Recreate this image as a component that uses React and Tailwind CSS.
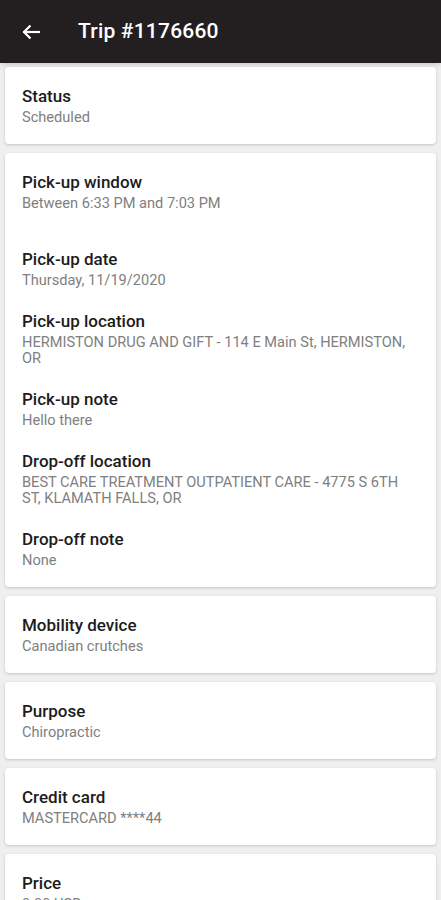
import React from 'react';

const sections = [
  [{ label: 'Status', value: 'Scheduled' }],
  [
    { label: 'Pick-up window', value: 'Between 6:33 PM and 7:03 PM', extra: true },
    { label: 'Pick-up date', value: 'Thursday, 11/19/2020' },
    { label: 'Pick-up location', value: 'HERMISTON DRUG AND GIFT - 114 E Main St, HERMISTON, OR' },
    { label: 'Pick-up note', value: 'Hello there' },
    { label: 'Drop-off location', value: 'BEST CARE TREATMENT OUTPATIENT CARE - 4775 S 6TH ST, KLAMATH FALLS, OR' },
    { label: 'Drop-off note', value: 'None' },
  ],
  [{ label: 'Mobility device', value: 'Canadian crutches' }],
  [{ label: 'Purpose', value: 'Chiropractic' }],
  [{ label: 'Credit card', value: 'MASTERCARD ****44' }],
  [{ label: 'Price', value: '0.00 USD' }],
];

function Item({ item }) {
  return (
    <div className={item.extra ? 'pb-[15px]' : ''}>
      <p className="text-[17px] leading-[20px] font-medium text-[#1c1c1c]">{item.label}</p>
      <p className="mt-[3px] text-[14.6px] leading-[16px] text-[#808080]">{item.value}</p>
    </div>
  );
}

export default function App() {
  return (
    <div className="min-h-[900px] bg-[#efefef]" style={{ fontFamily: 'Roboto, "Liberation Sans", sans-serif' }}>
      <div className="h-[63px] bg-[#231f20] flex items-center px-[22px] shadow-md">
        <svg width="18" height="16" viewBox="0 0 18 16" fill="none" stroke="white" strokeWidth="2.2" strokeLinecap="square">
          <path d="M17 8H2.5" />
          <path d="M8.5 1.5L2 8l6.5 6.5" strokeLinecap="butt" />
        </svg>
        <h1 className="ml-[38px] text-[21px] font-medium text-white tracking-[0.2px]">Trip #1176660</h1>
      </div>
      <div className="flex flex-col gap-[9px] px-[5px] pt-[4px] pb-4">
        {sections.map((s, i) => (
          <div key={i} className="bg-white rounded-[4px] shadow-[0_1px_3px_rgba(0,0,0,0.18)] pl-[17px] pr-[24px] py-[19px] flex flex-col gap-[23px]">
            {s.map((item) => (
              <Item key={item.label} item={item} />
            ))}
          </div>
        ))}
      </div>
    </div>
  );
}
